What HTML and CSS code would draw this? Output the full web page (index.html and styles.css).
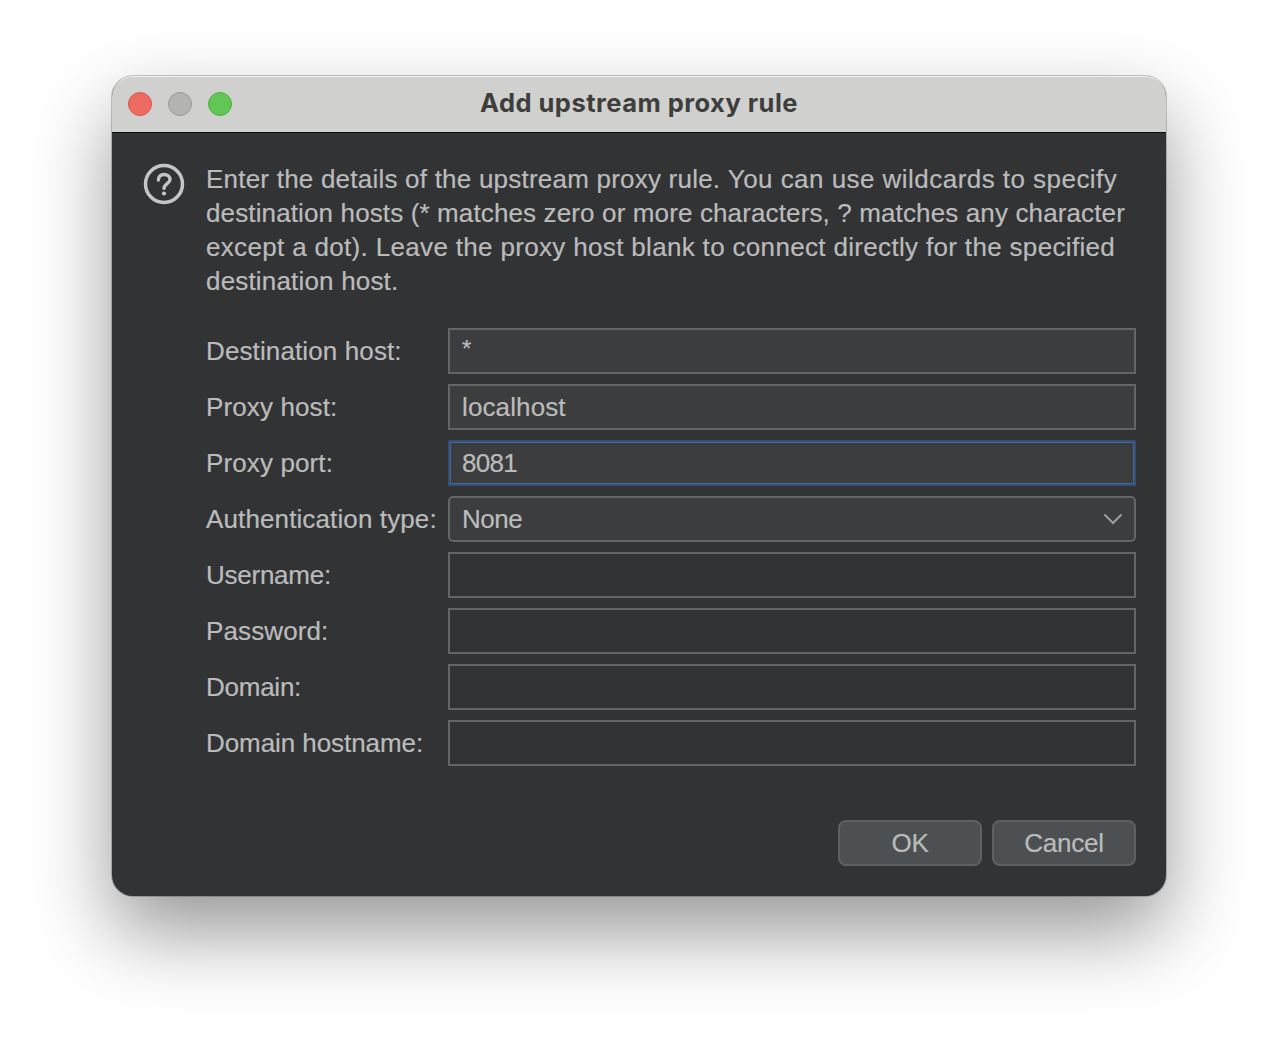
FILE: index.html
```html
<!DOCTYPE html>
<html lang="en">
<head>
<meta charset="utf-8">
<title>Add upstream proxy rule</title>
<link rel="stylesheet" href="styles.css">
</head>
<body>
<main class="window">
  <header class="titlebar">
    <div class="lights"><span class="light close"></span><span class="light minimise"></span><span class="light maximise"></span></div>
    <h1 class="title">Add upstream proxy rule</h1>
  </header>
  <section class="content">
    <svg class="help" viewBox="0 0 42 42" fill="none" stroke="#c4c5c7">
      <circle cx="21" cy="21" r="18.500" stroke-width="3.500"/>
      <path d="M15.400 17C15.400 13.600 17.700 11.500 21 11.500S27 13.600 27 16.500C27 20.700 21 20.500 21 25.400" stroke-width="3.400" stroke-linecap="round"/>
      <circle cx="21" cy="30.500" r="2.100" fill="#c4c5c7" stroke="none"/>
    </svg>
    <div class="main">
      <p class="intro">
        <span class="line l1">Enter the details of the upstream proxy rule. <span class="wide">You can use wildcards to specify</span></span>
        <span class="line l2">destination hosts (* matches zero or more characters, ? matches any character</span>
        <span class="line l3">except a dot). Leave the proxy host blank to connect directly for the specified</span>
        <span class="line l4">destination host.</span>
      </p>
      <div class="form">
        <div class="label looser"><span>Destination host:</span></div><div class="field wildcard"><span>*</span></div>
        <div class="label looser"><span>Proxy host:</span></div><div class="field looser"><span>localhost</span></div>
        <div class="label looser"><span>Proxy port:</span></div><div class="field focused"><span>8081</span></div>
        <div class="label looser"><span>Authentication type:</span></div>
        <div class="field select"><span>None</span><svg class="chevron" viewBox="0 0 20 12"><path d="M1.500 1.500 10 10l8.500-8.500" fill="none" stroke="#9c9ea0" stroke-width="2"/></svg></div>
        <div class="label tighter"><span>Username:</span></div><div class="field disabled"></div>
        <div class="label looser"><span>Password:</span></div><div class="field disabled"></div>
        <div class="label tighter"><span>Domain:</span></div><div class="field disabled"></div>
        <div class="label slight"><span>Domain hostname:</span></div><div class="field disabled"></div>
      </div>
      <div class="actions"><button class="button">OK</button><button class="button">Cancel</button></div>
    </div>
  </section>
</main>
</body>
</html>
```
FILE: styles.css
```css
* { box-sizing: border-box; }
body {
  margin: 0;
  height: 1044px;
  padding: 76px 112px;
  overflow: hidden;
  background: #fff;
  font: 26px/34px "Liberation Sans", Arial, sans-serif;
  color: #bbb;
  -webkit-text-stroke: .2px #bbb;
}
.window {
  width: 1054px;
  height: 820px;
  border-radius: 21px;
  background: #323335;
  box-shadow: 0 0 0 1px rgba(0, 0, 0, .2), 0 36px 80px rgba(0, 0, 0, .41);
}
.titlebar {
  display: grid;
  grid-template-columns: 120px 1fr 120px;
  align-items: center;
  height: 57px;
  padding: 0 16px;
  border-radius: 21px 21px 0 0;
  background: #d0d0ce;
  border-bottom: 1px solid #09090b;
  box-shadow: inset 0 2px 0 -1px #f1f1ef;
}
.lights { display: flex; gap: 16px; }
.light { width: 24px; height: 24px; border-radius: 50%; border: 1px solid; }
.close { background: #ed6b60; border-color: #da574e; }
.minimise { background: #b3b3b1; border-color: #999997; }
.maximise { background: #62c655; border-color: #50ae43; }
.title {
  margin: 0;
  text-align: center;
  white-space: nowrap;
  font: 700 25.500px/32px Inter, sans-serif;
  letter-spacing: .48px;
  color: #3e3e3d;
  padding-bottom: 2px;
  -webkit-text-stroke: 0;
}
.content { display: flex; padding: 29px 30px 30px 31px; }
.help { width: 42px; height: 42px; margin-top: 1px; flex: none; }
.main { margin-left: 21px; width: 930px; }
.intro { margin: 0 0 30px; }
.line { display: block; white-space: nowrap; width: max-content; }
.l1 { letter-spacing: .22px; }
.wide { letter-spacing: .46px; }
.l2 { letter-spacing: .13px; }
.l3 { letter-spacing: .33px; }
.l4 { letter-spacing: .18px; }
.form { display: grid; grid-template-columns: 242px 688px; row-gap: 10px; }
.label { height: 46px; line-height: 46px; white-space: nowrap; }
.looser { letter-spacing: .12px; }
.tighter { letter-spacing: -.25px; }
.slight { letter-spacing: -.07px; }
.field {
  height: 46px;
  line-height: 42px;
  padding-left: 12px;
  border: 2px solid #646566;
  background: #3c3d3e;
}
.wildcard { font-size: 24px; line-height: 38px; }
.focused { border-color: #355077; box-shadow: inset 0 0 0 1px #47698f; letter-spacing: -.7px; }
.disabled { background: #323335; }
.select {
  display: flex;
  align-items: center;
  justify-content: space-between;
  padding-right: 11px;
  border-radius: 5px;
  letter-spacing: -.5px;
}
.chevron { width: 20px; height: 12px; }
.actions { display: flex; justify-content: flex-end; gap: 10px; margin-top: 54px; }
.button {
  width: 144px;
  height: 46px;
  padding: 0;
  border: 2px solid #5e6162;
  border-radius: 8px;
  background: #4c5052;
  color: #bbb;
  font: inherit;
  letter-spacing: -.2px;
}
```
